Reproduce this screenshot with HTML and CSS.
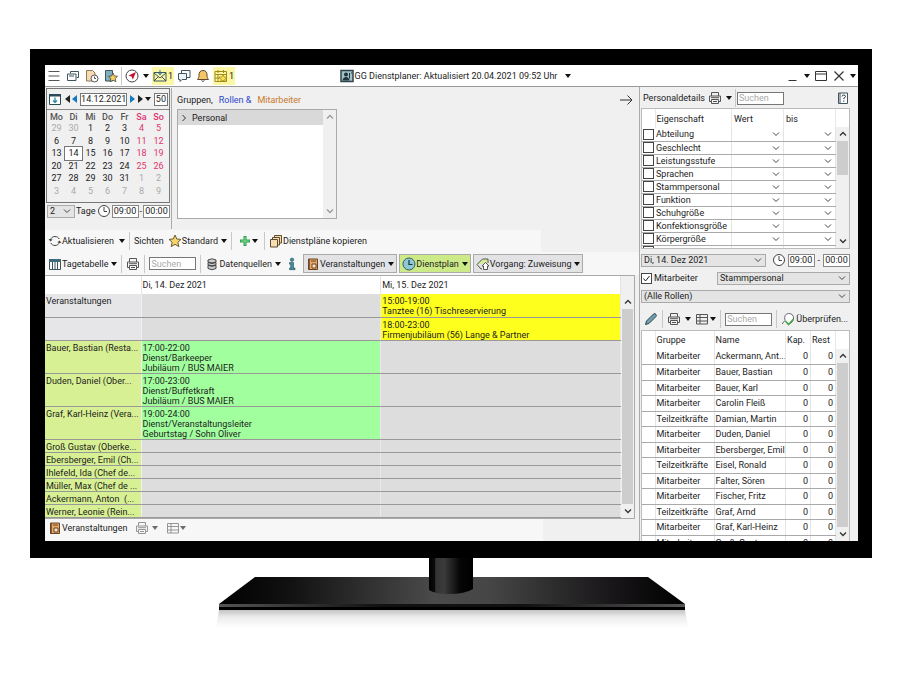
FILE: index.html
```html
<!DOCTYPE html>
<html lang="de">
<head>
    <meta charset="UTF-8">
    <meta name="viewport" content="width=device-width, initial-scale=1.0">
    <title>GG Dienstplaner</title>
    <link rel="stylesheet" href="styles.css">
</head>
<body>

    <!-- Shared icons -->
    <svg class="sprite" aria-hidden="true">
        <symbol id="i-menu" viewBox="0 0 14 14"><path d="M1.500 2.500h11M1.500 7h11M1.500 11.500h11" stroke="#555"/></symbol>
        <symbol id="i-windows" viewBox="0 0 14 14"><path d="M4.500 4.500v-2h8v6h-2M1.500 5h8.500v6.500H1.500zM3 7h5" fill="none" stroke="#3f5560"/></symbol>
        <symbol id="i-docclock" viewBox="0 0 14 14"><path d="M1.500 1.500h6l2.500 2.500v8H1.500z" fill="#f8dcae" stroke="#8a7a60"/><circle cx="9.500" cy="9.500" r="3.500" fill="#fff" stroke="#555"/><path d="M9.500 7.500v2h1.500" fill="none" stroke="#555"/></symbol>
        <symbol id="i-docstar" viewBox="0 0 14 14"><path d="M1.500 1.500h7v10.500h-7z" fill="#7fb0bd" stroke="#3f5560"/><path d="M9 4l1.400 3 3.100.3-2.300 2.200.7 3.200L9 11.200l-2.900 1.500.7-3.200-2.300-2.200L7.600 7z" fill="#f5cf62" stroke="#444" stroke-width=".8"/></symbol>
        <symbol id="i-compass" viewBox="0 0 14 14"><circle cx="7" cy="7" r="6" fill="#fff" stroke="#444"/><path d="M11 3L7.800 10.500 6.500 7.600 3.500 6.400z" fill="#c8102e"/></symbol>
        <symbol id="i-mail" viewBox="0 0 14 14"><path d="M1 3.500h12v8.500H1zM1 12l4.500-4.500M13 12L8.500 7.500M1 4l6 5 6-5" fill="none" stroke="#3f5560"/><path d="M7 1v4M5 3.500L7 6l2-2.500" fill="none" stroke="#2b7d96"/></symbol>
        <symbol id="i-chat" viewBox="0 0 14 14"><path d="M4.500 4V1.500h8.500v7h-3" fill="none" stroke="#3f5560"/><path d="M1.500 4.500h8v6H5l-2 2v-2H1.500z" fill="#eef4f5" stroke="#3f5560"/></symbol>
        <symbol id="i-bell" viewBox="0 0 14 14"><path d="M7 1.500c-3 0-4 2-4 4.500 0 2.500-.5 3-1.500 4.500h11C11.500 9 11 8.500 11 6c0-2.500-1-4.500-4-4.500z" fill="#f6c566" stroke="#5d4a30"/><path d="M5.500 11.500q1.500 2 3 0" fill="none" stroke="#5d4a30"/></symbol>
        <symbol id="i-planstar" viewBox="0 0 14 14"><path d="M1 2.500h11.500v10H1zM1 5.500h11M1 9h5M4 1v3M9.500 1v3M4 6v6" fill="none" stroke="#a38a18"/><path d="M9 5.500l1.200 2.400 2.600.3-1.900 1.800.5 2.600L9 11.300l-2.400 1.300.5-2.600-1.900-1.800 2.600-.3z" fill="#f7e04a" stroke="#a38a18" stroke-width=".8"/></symbol>
        <symbol id="i-person" viewBox="0 0 14 14"><path d="M1 1.500h12v11H1z" fill="#9dc3c9" stroke="#2f4349" stroke-width="1.500"/><circle cx="6" cy="5.500" r="2" fill="#22343a"/><path d="M2.500 11.500Q3 8 6 8t3.500 3.500z" fill="#22343a"/><path d="M9.500 4v5.500M11 4h1" stroke="#22343a"/></symbol>
        <symbol id="i-window" viewBox="0 0 14 14"><path d="M1.500 2.500h11v9h-11zM2 5h10" fill="none" stroke="#333"/></symbol>
        <symbol id="i-min" viewBox="0 0 14 14"><path d="M2.500 11.500h8" stroke="#333"/></symbol>
        <symbol id="i-close" viewBox="0 0 14 14"><path d="M2.500 2.500l9 9M11.500 2.500l-9 9" stroke="#333" stroke-width="1.200"/></symbol>
        <symbol id="i-calendar" viewBox="0 0 14 14"><path d="M1.500 2.500h11v10h-11z" fill="#fff" stroke="#2a4a55"/><path d="M1 2h12v2.500H1z" fill="#2a4a55"/><path d="M7 5.500v5M5 8.500l2 2 2-2" fill="none" stroke="#1f7fa0" stroke-width="1.200"/></symbol>
        <symbol id="i-clock" viewBox="0 0 14 14"><circle cx="7" cy="7" r="5.500" fill="#fff" stroke="#444"/><path d="M7 3v4.500h3" fill="none" stroke="#444"/></symbol>
        <symbol id="i-dienst" viewBox="0 0 14 14"><circle cx="7" cy="7" r="6" fill="#8cc8d6" stroke="#3b5a62"/><path d="M7 3v4.500h3.500" fill="none" stroke="#1d3338" stroke-width="1.200"/></symbol>
        <symbol id="i-arrow" viewBox="0 0 14 14"><path d="M1 7h12M8.500 2.500L13 7l-4.500 4.500" fill="none" stroke="#333"/></symbol>
        <symbol id="i-refresh" viewBox="0 0 14 14"><path d="M2.500 6C3 3.500 5 2.500 7 2.500c2 0 3.500 1 4.200 2.500M11.500 8c-.5 2.500-2.500 3.500-4.500 3.500-2 0-3.500-1-4.200-2.500" fill="none" stroke="#444"/><path d="M.5 5l2 2.500L4.700 5.500zM13.500 9l-2-2.500L9.300 8.500z" fill="#444"/></symbol>
        <symbol id="i-star" viewBox="0 0 14 14"><path d="M7 1l1.800 4 4.200.4-3.200 2.900 1 4.300L7 10.300l-3.800 2.300 1-4.300L1 5.400 5.200 5z" fill="#f9d36b" stroke="#6b5a2a"/></symbol>
        <symbol id="i-plus" viewBox="0 0 14 14"><path d="M7 2v10M2 7h10" stroke="#2f9e4f" stroke-width="3"/><path d="M7 3v8M3 7h8" stroke="#7fe09a"/></symbol>
        <symbol id="i-copy" viewBox="0 0 14 14"><path d="M5.500 3.500v-2h7v7.500h-2M3.500 5.500v-2h7v7.500h-2" fill="#f7deb0" stroke="#5d4a30"/><path d="M1.500 5.500h7v7.500h-7z" fill="#f7deb0" stroke="#5d4a30"/></symbol>
        <symbol id="i-table" viewBox="0 0 14 14"><path d="M1.500 2.500h11v10h-11z" fill="#fff" stroke="#3f5560"/><path d="M1 2h12v3H1z" fill="#3f6b78"/><path d="M4.500 5v7M7 5v7M9.500 5v7" stroke="#3f5560"/></symbol>
        <symbol id="i-print" viewBox="0 0 14 14"><path d="M3.500 5V1.500h7V5M3.500 10.500h-2V5h11v5.500h-2" fill="none" stroke="#555"/><path d="M3.500 8.500h7v4h-7zM5 10.500h4M3 6.700h8" fill="none" stroke="#555"/></symbol>
        <symbol id="i-db" viewBox="0 0 14 14"><path d="M3 2.500h8v9.500H3z" fill="#c9ced0"/><path d="M3 3q4-2.500 8 0v2q-4 2-8 0zM3 5.500q4 2 8 0v2.300q-4 2-8 0zM3 8.300q4 2 8 0V11.500q-4 2.500-8 0z" fill="none" stroke="#444"/></symbol>
        <symbol id="i-info" viewBox="0 0 14 14"><circle cx="7" cy="2.700" r="1.700" fill="#3c8fa3" stroke="#2a4a55" stroke-width=".6"/><path d="M4.500 5.500h4V11H10v1.700H4.500V11h1.200V7.200H4.500z" fill="#3c8fa3" stroke="#2a4a55" stroke-width=".6"/></symbol>
        <symbol id="i-book" viewBox="0 0 14 14"><path d="M2.500 2h9v10.500h-9z" fill="#e6a96b" stroke="#6b4424"/><path d="M3 2v10.500" stroke="#6b4424" stroke-width="1.500"/><path d="M5 4h5M6 7h4v4H6z" fill="#fbe6c8" stroke="#6b4424"/></symbol>
        <symbol id="i-house" viewBox="0 0 14 14"><path d="M1 7.500L6.500 2H12v4M1 7.500L5 12h1" fill="#d7ec9a" stroke="#555"/><path d="M9.500 5.500L13 9h-1.500v3.500h-4V9H6z" fill="#fff" stroke="#555"/></symbol>
        <symbol id="i-help" viewBox="0 0 14 14"><path d="M2.500 2h9v10.500h-9z" fill="#fff" stroke="#3f5560"/><path d="M4 2v10.500" stroke="#3f5560"/><path d="M6 5.500q0-1.500 1.700-1.500T9.500 5.500q0 1-1.700 1.700v1M7.800 9.500v1.200" fill="none" stroke="#333"/></symbol>
        <symbol id="i-pencil" viewBox="0 0 14 14"><path d="M1.500 12.500l1-3.500 7-7q1.500-1 2.500.5 1 1-.2 2.200L5 11.500z" fill="#6f9fb0" stroke="#2f4349"/></symbol>
        <symbol id="i-list" viewBox="0 0 14 14"><path d="M1.500 2.500h11v9.500h-11zM5 2.500v9.500M1.500 5.500h11M1.500 9h11" fill="none" stroke="#555"/></symbol>
        <symbol id="i-check" viewBox="0 0 14 14"><path d="M4 8.500Q2.500 2 7.500 1.500 13 1.500 12.500 7q-.5 3-3.500 4.500M4 8.500L1 12" fill="#fff" stroke="#667"/><path d="M4.500 9l3 3.500L12.500 7" fill="none" stroke="#44a544" stroke-width="1.500"/></symbol>
        <symbol id="i-up" viewBox="0 0 8 8"><path d="M1 5.500l3-3 3 3" fill="none" stroke="currentColor" stroke-width="1.300"/></symbol>
        <symbol id="i-down" viewBox="0 0 8 8"><path d="M1 2.500l3 3 3-3" fill="none" stroke="currentColor" stroke-width="1.300"/></symbol>
        <symbol id="i-right" viewBox="0 0 8 8"><path d="M2.500 1l3 3-3 3" fill="none" stroke="currentColor"/></symbol>
    </svg>

    <div class="monitor">
        <div class="screen">

            <header class="titlebar">
                <nav class="group">
                    <button aria-label="Menü"><svg class="icon"><use href="#i-menu"/></svg></button>
                    <button aria-label="Fenster"><svg class="icon"><use href="#i-windows"/></svg></button>
                    <button aria-label="Verlauf"><svg class="icon"><use href="#i-docclock"/></svg></button>
                    <button aria-label="Favoriten"><svg class="icon"><use href="#i-docstar"/></svg></button>
                    <span class="sep"></span>
                    <button aria-label="Navigation"><svg class="icon"><use href="#i-compass"/></svg><i class="caret"></i></button>
                    <button class="flag"><svg class="icon"><use href="#i-mail"/></svg>1</button>
                    <button aria-label="Chat"><svg class="icon"><use href="#i-chat"/></svg></button>
                    <button aria-label="Meldungen"><svg class="icon"><use href="#i-bell"/></svg></button>
                    <button class="flag"><svg class="icon"><use href="#i-planstar"/></svg>1</button>
                </nav>
                <button class="title"><svg class="icon"><use href="#i-person"/></svg>GG Dienstplaner: Aktualisiert 20.04.2021 09:52 Uhr<i class="caret"></i></button>
                <div class="group window-buttons">
                    <button aria-label="Minimieren"><svg class="icon"><use href="#i-min"/></svg><i class="caret"></i></button>
                    <button aria-label="Maximieren"><svg class="icon"><use href="#i-window"/></svg></button>
                    <button aria-label="Schließen"><svg class="icon"><use href="#i-close"/></svg><i class="caret"></i></button>
                </div>
            </header>

            <div class="workspace">
                <main class="left">
                    <section class="top">
                        <div class="date-panel">
                            <div class="calendar">
                                <div class="cal-nav">
                                    <button aria-label="Heute"><svg class="icon"><use href="#i-calendar"/></svg></button>
                                    <button class="tri prev" aria-label="Monat zurück"></button>
                                    <button class="tri prev blue" aria-label="Tag zurück"></button>
                                    <input class="date" type="text" value="14.12.2021" aria-label="Datum">
                                    <button class="tri next blue" aria-label="Tag vor"></button>
                                    <button class="tri next" aria-label="Monat vor"></button>
                                    <button aria-label="Auswahl"><i class="caret"></i></button>
                                    <input class="week" type="text" value="50" aria-label="Woche">
                                </div>
                                <table class="days">
                                    <thead>
                                        <tr><th>Mo</th><th>Di</th><th>Mi</th><th>Do</th><th>Fr</th><th>Sa</th><th>So</th></tr>
                                    </thead>
                                    <tbody>
                                        <tr><td class="off">29</td><td class="off">30</td><td>1</td><td>2</td><td>3</td><td>4</td><td>5</td></tr>
                                        <tr><td>6</td><td>7</td><td>8</td><td>9</td><td>10</td><td>11</td><td>12</td></tr>
                                        <tr><td>13</td><td class="today">14</td><td>15</td><td>16</td><td>17</td><td>18</td><td>19</td></tr>
                                        <tr><td>20</td><td>21</td><td>22</td><td>23</td><td>24</td><td>25</td><td>26</td></tr>
                                        <tr><td>27</td><td>28</td><td>29</td><td>30</td><td>31</td><td class="off">1</td><td class="off">2</td></tr>
                                        <tr><td class="off">3</td><td class="off">4</td><td class="off">5</td><td class="off">6</td><td class="off">7</td><td class="off">8</td><td class="off">9</td></tr>
                                    </tbody>
                                </table>
                            </div>
                            <div class="range">
                                <select id="tage"><option>2</option></select>
                                <label for="tage">Tage</label>
                                <svg class="icon"><use href="#i-clock"/></svg>
                                <input class="time" type="text" value="09:00" aria-label="Von">-<input class="time" type="text" value="00:00" aria-label="Bis">
                            </div>
                        </div>
                        <div class="groups">
                            <p class="links"><span>Gruppen,</span> <a class="roles" href="#">Rollen &amp;</a> <a class="staff" href="#">Mitarbeiter</a></p>
                            <div class="tree">
                                <div class="tree-body">
                                    <button class="tree-item"><svg class="chev"><use href="#i-right"/></svg>Personal</button>
                                </div>
                                <div class="scroll pale"><svg class="chev"><use href="#i-up"/></svg><svg class="chev"><use href="#i-down"/></svg></div>
                            </div>
                        </div>
                        <button class="collapse" aria-label="Einklappen"><svg class="icon"><use href="#i-arrow"/></svg></button>
                    </section>

                    <div class="toolbar first">
                        <button><svg class="icon"><use href="#i-refresh"/></svg>Aktualisieren<i class="caret wide"></i></button>
                        <span class="sep"></span>
                        <span>Sichten</span>
                        <button><svg class="icon"><use href="#i-star"/></svg>Standard<i class="caret"></i></button>
                        <span class="sep"></span>
                        <button class="add" aria-label="Neu"><svg class="icon"><use href="#i-plus"/></svg><i class="caret flush"></i></button>
                        <span class="sep"></span>
                        <button><svg class="icon"><use href="#i-copy"/></svg>Dienstpläne kopieren</button>
                    </div>
                    <div class="toolbar second">
                        <button><svg class="icon"><use href="#i-table"/></svg>Tagetabelle<i class="caret"></i></button>
                        <span class="sep"></span>
                        <button aria-label="Drucken"><svg class="icon"><use href="#i-print"/></svg></button>
                        <span class="sep"></span>
                        <input class="search" type="search" placeholder="Suchen" aria-label="Suchen">
                        <span class="sep"></span>
                        <button><svg class="icon"><use href="#i-db"/></svg>Datenquellen<i class="caret"></i></button>
                        <button aria-label="Info"><svg class="icon"><use href="#i-info"/></svg></button>
                        <div class="toggles">
                            <button class="toggle"><svg class="icon"><use href="#i-book"/></svg>Veranstaltungen<i class="caret"></i></button>
                            <button class="toggle active"><svg class="icon"><use href="#i-dienst"/></svg>Dienstplan<i class="caret"></i></button>
                            <button class="toggle"><svg class="icon"><use href="#i-house"/></svg>Vorgang: Zuweisung<i class="caret"></i></button>
                        </div>
                    </div>

                    <div class="plan">
                        <table class="plan-table">
                            <thead>
                                <tr><th class="who"></th><th>Di, 14. Dez 2021</th><th>Mi, 15. Dez 2021</th></tr>
                            </thead>
                            <tbody>
                                <tr class="event"><th>Veranstaltungen</th><td></td><td class="yellow">15:00-19:00<br>Tanztee (16) Tischreservierung</td></tr>
                                <tr class="event"><th></th><td></td><td class="yellow">18:00-23:00<br>Firmenjubiläum (56) Lange &amp; Partner</td></tr>
                                <tr class="duty"><th>Bauer, Bastian (Resta...</th><td class="green">17:00-22:00<br>Dienst/Barkeeper<br>Jubiläum / BUS MAIER</td><td></td></tr>
                                <tr class="duty"><th>Duden, Daniel (Ober...</th><td class="green">17:00-23:00<br>Dienst/Buffetkraft<br>Jubiläum / BUS MAIER</td><td></td></tr>
                                <tr class="duty"><th>Graf, Karl-Heinz (Vera...</th><td class="green">19:00-24:00<br>Dienst/Veranstaltungsleiter<br>Geburtstag / Sohn Oliver</td><td></td></tr>
                                <tr class="free"><th>Groß Gustav (Oberke...</th><td></td><td></td></tr>
                                <tr class="free"><th>Ebersberger, Emil (Ch...</th><td></td><td></td></tr>
                                <tr class="free"><th>Ihlefeld, Ida (Chef de...</th><td></td><td></td></tr>
                                <tr class="free"><th>Müller, Max (Chef de ...</th><td></td><td></td></tr>
                                <tr class="free"><th>Ackermann, Anton&nbsp; (...</th><td></td><td></td></tr>
                                <tr class="free"><th>Werner, Leonie (Rein...</th><td></td><td></td></tr>
                            </tbody>
                        </table>
                        <div class="scroll plan-scroll"><svg class="chev"><use href="#i-up"/></svg><span class="thumb"></span><svg class="chev"><use href="#i-down"/></svg></div>
                    </div>

                    <footer class="bottom">
                        <button><svg class="icon"><use href="#i-book"/></svg>Veranstaltungen</button>
                        <button class="dim" aria-label="Drucken"><svg class="icon"><use href="#i-print"/></svg><i class="caret"></i></button>
                        <button class="dim" aria-label="Ansicht"><svg class="icon"><use href="#i-list"/></svg><i class="caret flush"></i></button>
                    </footer>
                </main>

                <aside class="right">
                    <div class="details-head">
                        <span>Personaldetails</span>
                        <button aria-label="Drucken"><svg class="icon"><use href="#i-print"/></svg><i class="caret"></i></button>
                        <span class="sep"></span>
                        <input class="search" type="search" placeholder="Suchen" aria-label="Suchen">
                        <button class="help" aria-label="Hilfe"><svg class="icon"><use href="#i-help"/></svg></button>
                    </div>

                    <div class="list props">
                        <table>
                            <thead>
                                <tr><th class="c-box"></th><th>Eigenschaft</th><th class="c-val">Wert</th><th class="c-val">bis</th></tr>
                            </thead>
                            <tbody id="props"></tbody>
                        </table>
                        <div class="scroll"><svg class="chev"><use href="#i-up"/></svg><span class="thumb short"></span><svg class="chev"><use href="#i-down"/></svg></div>
                    </div>

                    <div class="filters">
                        <div class="filter">
                            <select class="grow" aria-label="Tag"><option>Di, 14. Dez 2021</option></select>
                            <svg class="icon"><use href="#i-clock"/></svg>
                            <input class="time" type="text" value="09:00" aria-label="Von"><span>-</span><input class="time" type="text" value="00:00" aria-label="Bis">
                        </div>
                        <div class="filter">
                            <input type="checkbox" id="mitarbeiter" checked>
                            <label class="grow" for="mitarbeiter">Mitarbeiter</label>
                            <select class="staff-select" aria-label="Personalart"><option>Stammpersonal</option></select>
                        </div>
                        <div class="filter">
                            <select class="grow" aria-label="Rolle"><option>(Alle Rollen)</option></select>
                        </div>
                    </div>

                    <div class="staff-tools">
                        <button aria-label="Bearbeiten"><svg class="icon"><use href="#i-pencil"/></svg></button>
                        <span class="sep"></span>
                        <button aria-label="Drucken"><svg class="icon"><use href="#i-print"/></svg><i class="caret"></i></button>
                        <button aria-label="Ansicht"><svg class="icon"><use href="#i-list"/></svg><i class="caret flush"></i></button>
                        <span class="sep"></span>
                        <input class="search" type="search" placeholder="Suchen" aria-label="Suchen">
                        <span class="sep"></span>
                        <button><svg class="icon"><use href="#i-check"/></svg>Überprüfen...</button>
                    </div>

                    <div class="list people">
                        <table>
                            <thead>
                                <tr><th class="c-box"></th><th class="c-group">Gruppe</th><th>Name</th><th class="c-num">Kap.</th><th class="c-num">Rest</th></tr>
                            </thead>
                            <tbody id="people"></tbody>
                        </table>
                        <div class="scroll"><svg class="chev"><use href="#i-up"/></svg><span class="thumb"></span><svg class="chev"><use href="#i-down"/></svg></div>
                    </div>
                </aside>
            </div>
        </div>
    </div>

    <svg class="stand" viewBox="0 0 480 80" aria-hidden="true">
        <defs>
            <linearGradient id="base"><stop offset="0" stop-color="#000"/><stop offset=".15" stop-color="#111"/><stop offset=".46" stop-color="#4a4a4a"/><stop offset=".58" stop-color="#464646"/><stop offset=".85" stop-color="#171517"/><stop offset="1" stop-color="#000"/></linearGradient>
            <linearGradient id="pole"><stop offset="0" stop-color="#000"/><stop offset=".14" stop-color="#0c0c0c"/><stop offset=".15" stop-color="#333"/><stop offset=".35" stop-color="#3a3a3a"/><stop offset=".7" stop-color="#060606"/><stop offset="1" stop-color="#000"/></linearGradient>
            <linearGradient id="edge"><stop offset="0" stop-color="#555"/><stop offset=".35" stop-color="#111"/><stop offset=".65" stop-color="#111"/><stop offset="1" stop-color="#555"/></linearGradient>
            <linearGradient id="shade" x2="0" y2="1"><stop offset="0" stop-color="#c4c4c4"/><stop offset=".4" stop-color="#ececec"/><stop offset="1" stop-color="#fff"/></linearGradient>
        </defs>
        <path d="M8 52h466l3 18H5z" fill="url(#shade)"/>
        <path d="M44 19h393l37 27H8z" fill="url(#base)"/>
        <path d="M8 46h466v6H8z" fill="#000"/>
        <path d="M8 46h466v3H8z" fill="url(#edge)"/>
        <path d="M218 0h44v31q-8 5-24 5-14 0-20-4z" fill="url(#pole)"/>
    </svg>

    <script>
        const props = ["Abteilung", "Geschlecht", "Leistungsstufe", "Sprachen", "Stammpersonal", "Funktion", "Schuhgröße", "Konfektionsgröße", "Körpergröße", ""];
        const people = [
            ["Mitarbeiter", "Ackermann, Ant..."],
            ["Mitarbeiter", "Bauer, Bastian"],
            ["Mitarbeiter", "Bauer, Karl"],
            ["Mitarbeiter", "Carolin Fleiß"],
            ["Teilzeitkräfte", "Damian, Martin"],
            ["Mitarbeiter", "Duden, Daniel"],
            ["Mitarbeiter", "Ebersberger, Emil"],
            ["Teilzeitkräfte", "Eisel, Ronald"],
            ["Mitarbeiter", "Falter, Sören"],
            ["Mitarbeiter", "Fischer, Fritz"],
            ["Teilzeitkräfte", "Graf, Arnd"],
            ["Mitarbeiter", "Graf, Karl-Heinz"],
            ["Mitarbeiter", "Groß, Gustav"]
        ];

        document.getElementById("props").innerHTML = props.map((name, i) => `
            <tr>
                <td><input type="checkbox" id="prop${i}"></td>
                <td><label for="prop${i}">${name}</label></td>
                <td><select aria-label="${name} Wert"></select></td>
                <td><select aria-label="${name} bis"></select></td>
            </tr>`).join("");

        document.getElementById("people").innerHTML = people.map(([group, name]) => `
            <tr><td></td><td>${group}</td><td>${name}</td><td class="num">0</td><td class="num">0</td></tr>`).join("");
    </script>

</body>
</html>
```
FILE: styles.css
```css
* {
    box-sizing: border-box;
}

body {
    margin: 0;
    padding: 49px 28px 0 30px;
    background-color: #fff;
    font-family: Roboto, "Open Sans", sans-serif;
    font-size: 9px;
    line-height: 10px;
    color: #1c1c1c;
}

button, input, select {
    font: inherit;
    color: inherit;
    margin: 0;
    padding: 0;
    border: none;
    border-radius: 0;
    background: none;
}

button {
    display: flex;
    align-items: center;
    gap: 1px;
    white-space: nowrap;
}

table {
    border-collapse: collapse;
    table-layout: fixed;
    width: 100%;
}

th, td {
    padding: 0;
    font-weight: 400;
    text-align: left;
    white-space: nowrap;
    overflow: hidden;
}

a {
    text-decoration: none;
}

.sprite {
    display: none;
}

.icon {
    width: 14px;
    height: 14px;
    flex: none;
}

.chev {
    width: 8px;
    height: 8px;
    flex: none;
    color: #333;
}

.caret {
    border: 3px solid transparent;
    border-top: 4px solid #111;
    border-bottom: none;
    margin-left: 3px;
}

.caret.wide {
    margin-left: 5px;
}

.caret.flush {
    margin-left: 0;
}

.sep {
    width: 1px;
    height: 18px;
    background-color: #c8c8c8;
    flex: none;
}

/* Monitor */

.monitor {
    padding: 16px 14px 17px 15px;
    background-color: #000;
}

.screen {
    background-color: #f0f0f0;
}

.stand {
    display: block;
    width: 480px;
    height: 80px;
    margin: 0 auto;
}

/* Title bar */

.titlebar {
    display: grid;
    grid-template-columns: 1fr auto 1fr;
    align-items: center;
    height: 22px;
    padding: 0 2px;
    background-color: #fff;
    border-bottom: 1px solid #999;
}

.group {
    display: flex;
    align-items: center;
    gap: 5px;
}

.group .sep {
    margin: 0 -2px;
}

.group .flag {
    height: 18px;
    margin: 0 -2px;
    padding: 0 1px;
    background-color: #fbf7a5;
}

.title {
    padding-left: 8px;
}

.title .caret {
    margin-left: 7px;
}

.window-buttons {
    gap: 4px;
    justify-content: flex-end;
}

/* Workspace */

.workspace {
    display: flex;
    height: 454px;
}

.left {
    display: flex;
    flex-direction: column;
    flex: 1;
    min-width: 0;
}

.right {
    display: flex;
    flex-direction: column;
    width: 219px;
    padding: 1px 8px 0 1px;
    border-left: 1px solid #aaa;
}

.top {
    display: flex;
    height: 143px;
    padding: 1px;
}

.date-panel {
    width: 126px;
    border-right: 1px solid #aaa;
}

.calendar {
    width: 124px;
    height: 115px;
    border: 1px solid #777;
}

.cal-nav {
    display: flex;
    align-items: center;
    justify-content: space-between;
    height: 21px;
    padding: 0 1px;
    border-bottom: 1px solid #888;
}

.cal-nav input {
    height: 13px;
    border: 1px solid #777;
    background-color: #fff;
    text-align: center;
}

.cal-nav .caret {
    margin: 0;
}

.date {
    width: 47px;
}

.week {
    width: 14px;
}

.tri {
    border: 4px solid transparent;
}

.prev {
    border-left: none;
    border-right: 5px solid #222;
}

.next {
    border-right: none;
    border-left: 5px solid #222;
}

.prev.blue {
    border-right-color: #1479c4;
}

.next.blue {
    border-left-color: #1479c4;
}

.days {
    height: 85px;
    width: 119px;
    margin: 2px 1px 1px;
}

.days th, .days td {
    text-align: center;
}

.days th {
    color: #555;
    font-weight: 500;
}

.days th:nth-child(n+6), .days td:nth-child(n+6) {
    color: #e0356f;
}

.days td.off {
    color: #aaa;
}

.days .today {
    outline: 1px solid #777;
    background-color: #fff;
}

.range {
    display: flex;
    align-items: center;
    gap: 1px;
    height: 16px;
    padding: 0 1px;
}

.range select {
    width: 28px;
}

.range .icon {
    margin-left: auto;
}

.time {
    width: 27px;
    height: 13px;
    border: 1px solid #888;
    background-color: #fff;
    text-align: center;
}

select {
    appearance: none;
    height: 13px;
    padding: 0 2px;
    border: 1px solid #aaa;
    background: #e4e4e4 url("data:image/svg+xml,%3Csvg xmlns='http://www.w3.org/2000/svg' width='8' height='8'%3E%3Cpath d='M1 2.500l3 3 3-3' fill='none' stroke='%23444'/%3E%3C/svg%3E") no-repeat right 3px center;
}

.groups {
    width: 165px;
    padding-left: 5px;
}

.links {
    display: flex;
    gap: 6px;
    margin: 7px 0 4px;
}

.roles {
    color: #2a48c8;
}

.staff {
    color: #c8782a;
}

.tree {
    display: flex;
    height: 110px;
    border: 1px solid #aaa;
    background-color: #fff;
}

.tree-body {
    flex: 1;
}

.tree-item {
    width: 145px;
    height: 15px;
    gap: 4px;
    padding-left: 2px;
    background-color: #d9d9d9;
}

.scroll {
    display: flex;
    flex-direction: column;
    align-items: center;
    justify-content: space-between;
    width: 13px;
    flex: none;
    padding: 3px 0;
    background-color: #f0f0f0;
}

.scroll.pale .chev {
    color: #999;
}

.thumb {
    width: 11px;
    flex: 1;
    margin: 3px 0;
    background-color: #cdcdcd;
}

.thumb.short {
    flex: none;
    height: 34px;
    margin-bottom: auto;
}

.collapse {
    margin: 5px 5px auto auto;
}

/* Toolbars */

.toolbar {
    display: flex;
    align-items: center;
    gap: 4px;
    padding: 0 3px;
    background-color: #f7f7f7;
}

.toolbar button {
    gap: 0;
}

.toolbar.first {
    width: 496px;
    height: 22px;
}

.toolbar.second {
    height: 23px;
}

.toolbar .add {
    padding: 0 2px;
}

.search {
    appearance: none;
    width: 47px;
    height: 13px;
    padding: 0 1px;
    border: 1px solid #777;
    background-color: #fff;
}

.search::placeholder {
    color: #aaa;
    opacity: 1;
}

.toggles {
    display: flex;
    gap: 2px;
}

.toggle {
    height: 19px;
    padding: 0 2px;
    border: 1px solid #aaa;
    background-color: #e3e3e6;
}

.toggle.active {
    background-color: #cdea88;
}

/* Plan */

.plan {
    display: flex;
    margin-right: 4px;
    border-top: 1px solid #aaa;
    border-right: 1px solid #aaa;
    border-bottom: 1px solid #aaa;
    background-color: #f0f0f0;
}

.plan-table {
    flex: 1;
}

.plan-table th, .plan-table td {
    padding: 2px 1px 0;
    vertical-align: top;
    border-bottom: 1px solid #999;
}

.plan-table thead th {
    height: 18px;
    padding-top: 4px;
    background-color: #fff;
    border-right: 1px solid #e4e4e4;
    border-bottom: none;
}

.plan-table .who {
    width: 96px;
}

.plan-table tbody th {
    border-right: 1px solid #f0f0f0;
    background-color: #d8f094;
}

.plan-table tbody td {
    border-right: 1px solid #eaeaea;
    background-color: #dedddd;
}

.plan-table tbody .event th {
    background-color: #e6e6e8;
}

.event {
    height: 23px;
}

.plan-table .yellow {
    background-color: #ffff1e;
}

.plan-table .green {
    background-color: #a2ff9e;
}

.duty {
    height: 33px;
}

.free {
    height: 13px;
}

.plan-scroll {
    padding-top: 22px;
}

.bottom {
    display: flex;
    align-items: center;
    gap: 8px;
    flex: 1;
    width: 498px;
    padding: 0 3px 3px;
    background-color: #f7f7f7;
}

.bottom button {
    gap: 0;
}

.dim {
    opacity: 0.6;
}

/* Right panel */

.details-head {
    display: flex;
    align-items: center;
    gap: 3px;
    height: 20px;
    padding-left: 2px;
}

.details-head .search {
    margin-left: -2px;
}

.help {
    margin-left: auto;
}

.list {
    display: flex;
    overflow: hidden;
    border: 1px solid #bbb;
    background-color: #fff;
}

.list td {
    border-bottom: 1px solid #aaa;
    border-right: 1px solid #e4e4e4;
}

.list th {
    border-right: 1px solid #e8e8e8;
}

.list .scroll {
    margin-top: 18px;
}

.props {
    height: 141px;
}

.props thead tr {
    height: 19px;
}

.props tbody tr {
    height: 13px;
}

.props td:first-child {
    padding-left: 1px;
    border-right: none;
}

.props td:nth-child(2), .props th:nth-child(2) {
    padding-left: 1px;
}

.c-box {
    width: 13px;
}

.c-val {
    width: 52px;
    padding-left: 2px;
}

.props select {
    display: block;
    width: 100%;
    height: 12px;
    border: none;
    background-color: transparent;
}

input[type="checkbox"] {
    appearance: none;
    display: block;
    width: 11px;
    height: 11px;
    border: 1px solid #444;
    background-color: #fff;
}

input[type="checkbox"]:checked {
    background-image: url("data:image/svg+xml,%3Csvg xmlns='http://www.w3.org/2000/svg' width='9' height='9'%3E%3Cpath d='M1.500 4.500l2 2.500 4-5' fill='none' stroke='%23222'/%3E%3C/svg%3E");
}

.filters {
    display: flex;
    flex-direction: column;
    gap: 4px;
    padding: 4px 0 5px;
}

.filter {
    display: flex;
    align-items: center;
    gap: 2px;
    height: 14px;
}

.filter .icon {
    margin-left: 4px;
}

.filter .time + span {
    padding: 0 1px;
}

.grow {
    flex: 1;
}

.staff-select {
    width: 133px;
}

.staff-tools {
    display: flex;
    align-items: center;
    justify-content: space-between;
    height: 22px;
    padding: 0 2px 0 3px;
}

.people {
    flex: 1;
    border-bottom: none;
}

.people thead tr {
    height: 18px;
}

.people tbody tr {
    height: 15px;
}

.people tbody tr:nth-child(even) {
    height: 16px;
}

.people th, .people td {
    padding: 0 2px 0 1px;
}

.c-group {
    width: 59px;
}

.c-num {
    width: 25px;
}

.people .num {
    text-align: right;
}
```
